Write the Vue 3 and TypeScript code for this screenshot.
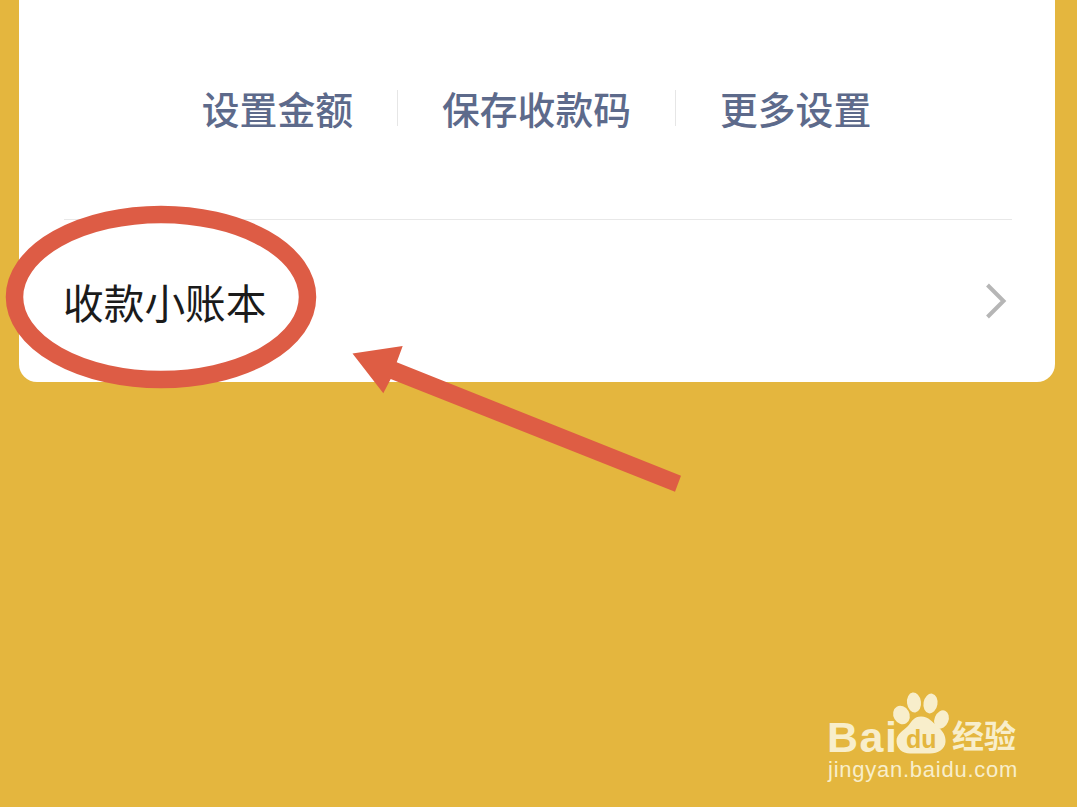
<script setup lang="ts">
const actions: string[] = ['设置金额', '保存收款码', '更多设置']
</script>

<template>
  <div class="page">
    <section class="card">
      <div class="actions">
        <span v-for="a in actions" :key="a" class="action">{{ a }}</span>
      </div>
      <div class="ledger">
        <span class="ledger-title">收款小账本</span>
        <svg class="chevron" width="24" height="38" viewBox="0 0 24 38">
          <path d="M3.5 3 L19.5 19 L3.5 35" fill="none" stroke="#b6b6b6" stroke-width="4" />
        </svg>
      </div>
    </section>

    <svg class="annotation" width="1077" height="807" viewBox="0 0 1077 807">
      <ellipse cx="161" cy="297" rx="146.5" ry="82.5" fill="none" stroke="#dd5c45" stroke-width="17.5" />
      <polygon
        fill="#de5d44"
        points="352.5,353.5 402.7,346 396.7,362.3 681,475.7 675,491.7 390.7,379 383.3,393.3"
      />
    </svg>

    <svg class="logo" width="200" height="100" viewBox="820 690 200 100">
      <g fill="#f8eecb">
        <ellipse cx="914" cy="702.5" rx="7" ry="10" transform="rotate(-8 914 702.5)" />
        <ellipse cx="930.5" cy="703.5" rx="7" ry="10" transform="rotate(10 930.5 703.5)" />
        <ellipse cx="901.5" cy="715" rx="8" ry="9.5" transform="rotate(-30 901.5 715)" />
        <ellipse cx="941.5" cy="719.5" rx="7" ry="9.5" transform="rotate(22 941.5 719.5)" />
        <path d="M921 716.5 C929 716.5 932 722 938 727 C943 731 946 736 945.5 742 C945 749 938 753.5 930 753.5 L910 753.5 C902 753.5 896.5 748 896.5 741 C896.5 734 903 731 908 726 C912 721 914 716.5 921 716.5 Z" />
        <text class="bai" x="827" y="751.5">Bai</text>
        <text class="jy" x="952" y="748">经验</text>
        <text class="url" x="828" y="777">jingyan.baidu.com</text>
      </g>
      <text class="du" x="906" y="748">du</text>
    </svg>
  </div>
</template>

<style scoped>
.page {
  position: relative;
  width: 1077px;
  height: 807px;
  overflow: hidden;
  background: #e4b63e;
  font-family: "Noto Sans CJK SC", "Liberation Sans", sans-serif;
}
.card {
  box-sizing: border-box;
  width: 1036px;
  height: 382px;
  margin-left: 19px;
  padding: 0 43px 0 45px;
  background: #fff;
  border-radius: 0 0 18px 18px;
  display: flex;
  flex-direction: column;
}
.actions {
  height: 220px;
  box-sizing: border-box;
  padding: 90px 3px 0 0;
  display: flex;
  justify-content: center;
  align-items: flex-start;
  border-bottom: 1px solid #e8e8e8;
}
.action {
  padding: 0 44px;
  height: 36px;
  line-height: 35px;
  font-size: 37.8px;
  font-weight: 500;
  color: #5d6a8b;
  white-space: nowrap;
  border-left: 1px solid #e6e6e6;
}
.action:first-child {
  border-left: 0;
}
.ledger {
  flex: 1;
  display: flex;
  align-items: center;
  justify-content: space-between;
}
.ledger-title {
  font-size: 40.7px;
  color: #1b1b1b;
  line-height: 1;
  margin-top: 2px;
  margin-left: -1px;
}
.chevron {
  margin-right: 4px;
}
.annotation {
  position: absolute;
  left: 0;
  top: 0;
  pointer-events: none;
}
.logo {
  position: absolute;
  left: 820px;
  top: 690px;
}
.bai {
  font-family: "Liberation Sans", sans-serif;
  font-weight: 700;
  font-size: 43px;
  letter-spacing: 1.5px;
}
.jy {
  font-family: "Noto Sans CJK SC", sans-serif;
  font-weight: 700;
  font-size: 32px;
}
.url {
  font-family: "Liberation Sans", sans-serif;
  font-size: 22px;
  letter-spacing: 0.75px;
}
.du {
  font-family: "Liberation Sans", sans-serif;
  font-weight: 700;
  font-size: 25px;
  fill: #e4b63e;
}
</style>

<style>
html, body {
  margin: 0;
  background: #e4b63e;
}
</style>
